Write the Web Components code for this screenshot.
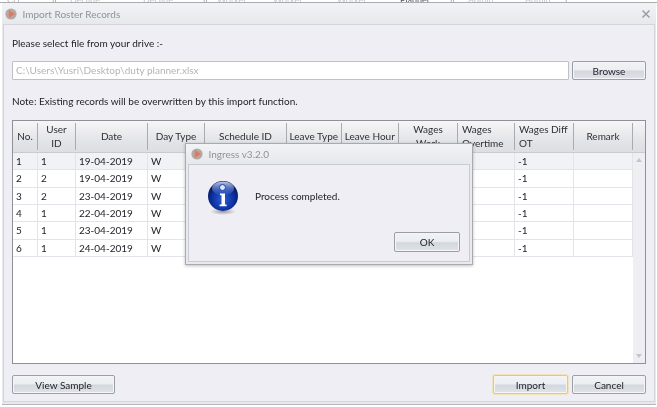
<!DOCTYPE html>
<html><head><meta charset="utf-8">
<style>
html,body{margin:0;padding:0;background:#fff;width:657px;height:407px;overflow:hidden;font:10px "Lato","Open Sans",sans-serif;color:#23232b}
</style></head><body>
<import-window heading="Import Roster Records">
  <span slot="label">Please select file from your drive :-</span>
  <span slot="note">Note: Existing records will be overwritten by this import function.</span>
  <roster-table slot="table"></roster-table>
</import-window>
<script>
const btnCss=`:host{display:block;box-sizing:border-box;border:1px solid #9a9ea6;border-radius:2px;background:linear-gradient(#f1f2f5 0,#eceef2 45%,#d3d8df 55%,#e0e3e8 100%);box-shadow:inset 0 0 0 1px #f4f5f8;text-align:center;color:#23232b;height:100%;line-height:18px}
:host([focused]){border-color:#e8c878;box-shadow:0 0 0 1px #f3e3b8,inset 0 0 0 1px #f4f5f8}`;
class UiButton extends HTMLElement{constructor(){super();this.attachShadow({mode:'open'}).innerHTML=`<style>${btnCss}</style><slot></slot>`}}
customElements.define('ui-button',UiButton);

class TitleIcon extends HTMLElement{constructor(){super();this.attachShadow({mode:'open'}).innerHTML=`<style>:host{display:block;width:12px;height:12px}svg{display:block}</style>
<svg width="12" height="12" viewBox="0 0 12 12"><circle cx="6" cy="6" r="5.6" fill="#b5a9a6"/><path d="M3.8 1.9 10 6 3.8 10.1Z" fill="#e2795a"/></svg>`}}
customElements.define('title-icon',TitleIcon);

class TitleBar extends HTMLElement{constructor(){super();this.attachShadow({mode:'open'}).innerHTML=`<style>:host{display:flex;align-items:center;gap:5.5px;height:21px;padding:0 3px 0 3px;box-sizing:border-box;background:linear-gradient(#f2f3f6,#e6e8ec);color:#8f9298;font-size:10px}
.t{flex:1}</style><title-icon></title-icon><span class="t"><slot></slot></span><slot name="close"></slot>`}}
customElements.define('title-bar',TitleBar);

class InfoIcon extends HTMLElement{constructor(){super();this.attachShadow({mode:'open'}).innerHTML=`<style>:host{display:block;width:32px;height:36px}svg{display:block}</style>
<svg width="32" height="36" viewBox="0 0 32 36">
<defs><radialGradient id="b" cx=".5" cy=".62" r=".62"><stop offset="0" stop-color="#2c5fd6"/><stop offset=".6" stop-color="#0d2f9e"/><stop offset="1" stop-color="#04124f"/></radialGradient>
<linearGradient id="g" x1="0" y1="0" x2="0" y2="1"><stop offset="0" stop-color="#c6d4f2" stop-opacity=".95"/><stop offset="1" stop-color="#4f78d6" stop-opacity=".15"/></linearGradient>
<radialGradient id="s"><stop offset="0" stop-color="#555" stop-opacity=".55"/><stop offset="1" stop-color="#555" stop-opacity="0"/></radialGradient></defs>
<ellipse cx="16" cy="31.5" rx="13" ry="3.5" fill="url(#s)"/>
<circle cx="16" cy="16" r="15" fill="url(#b)"/>
<ellipse cx="16" cy="8.5" rx="11" ry="7" fill="url(#g)"/>
<circle cx="15.5" cy="7.5" r="3" fill="#dfe7f7" stroke="#1a3fa8" stroke-width="1"/>
<path d="M13 13.5h5v11h1.600v1.800h-7V24.500H14.500v-9.200h-1.500Z" fill="#fff"/>
</svg>`}}
customElements.define('info-icon',InfoIcon);

const COLS=[25,38,72,57,82,54.5,57.5,59,57,59,59];
const HEAD=['No.','User<br>ID','Date','Day Type','Schedule ID','Leave Type','Leave Hour','Wages<br>Work','Wages<br>Overtime','Wages Diff<br>OT','Remark'];
const ROWS=[['1','1','19-04-2019','W'],['2','2','19-04-2019','W'],['3','2','23-04-2019','W'],['4','1','22-04-2019','W'],['5','1','23-04-2019','W'],['6','1','24-04-2019','W']];
class RosterTable extends HTMLElement{constructor(){super();
const tpl=COLS.map(c=>c+'px').join(' ');
const hd=HEAD.map((h,i)=>`<div class="h${i==8||i==9?' l':''}">${h}</div>`).join('');
const rw=ROWS.map((r,n)=>`<div class="r${n==0?' sel':''}">`+COLS.map((_,i)=>`<div class="c">${i<4?r[i]:i==9?'-1':''}</div>`).join('')+`</div>`).join('');
this.attachShadow({mode:'open'}).innerHTML=`<style>
:host{display:flex;flex-direction:column;box-sizing:border-box;height:100%;background:#fff;border:1px solid #8f9196;position:relative;min-height:0}
.head,.r{display:grid;grid-template-columns:${tpl}}
.head{height:32px;box-sizing:border-box;background:linear-gradient(#f6f6f7,#e4e5e8 60%,#dcdee1);border-bottom:1px solid #c9cbd0;padding-right:13px;color:#2e2f36}
.h{display:flex;align-items:center;justify-content:center;text-align:center;line-height:13.500px;border-right:1px solid #a9abb1;margin:2px 0 3px;box-sizing:border-box;white-space:nowrap}
.h.l{justify-content:flex-start;text-align:left;padding-left:4px}
.wrap{flex:1;display:flex;min-height:0}
.body{flex:1}
.r{height:17.33px;box-sizing:border-box;border-bottom:1px solid #e3e4e9;color:#23232b}
.c{border-right:1px solid #e3e4e9;padding-left:3px;line-height:16px;overflow:hidden;white-space:nowrap;box-sizing:border-box}
.sel{background:#f1f2f5}
.sb{width:13px;background:#eeeef3;display:flex;flex-direction:column;justify-content:space-between;align-items:center;padding:5px 0;box-sizing:border-box}
.sb i{display:block;width:0;height:0;border-left:3.5px solid transparent;border-right:3.5px solid transparent}
.up{border-bottom:4px solid #c3c5ca}.dn{border-top:4px solid #c3c5ca}
</style><div class="head">${hd}</div><div class="wrap"><div class="body">${rw}</div><div class="sb"><i class="up"></i><i class="dn"></i></div></div>`}}
customElements.define('roster-table',RosterTable);

class MessageDialog extends HTMLElement{constructor(){super();this.attachShadow({mode:'open'}).innerHTML=`<style>
:host{display:flex;flex-direction:column;position:absolute;left:185px;top:143px;width:288px;height:122px;box-sizing:border-box;border:1px solid #a8aaae;background:#e8eaee;box-shadow:0 1px 3px rgba(0,0,0,.25)}
.panel{flex:1;margin:0 2px 2px;border:1px solid #c9cbd2;background:#eeeef4;display:flex;flex-direction:column;box-sizing:border-box;padding:15px 9px 9px 18px}
.msg{display:flex;gap:16px;flex:1;align-items:flex-start}
.msg span{margin-top:10px;color:#23232b}
.foot{display:flex;justify-content:flex-end}
ui-button{width:66px;height:20px}
title-bar{flex:none;height:20px;padding-left:5px}
</style><title-bar>Ingress v3.2.0</title-bar><div class="panel"><div class="msg"><info-icon></info-icon><span>Process completed.</span></div><div class="foot"><ui-button>OK</ui-button></div></div>`}}
customElements.define('message-dialog',MessageDialog);

class BehindStrip extends HTMLElement{constructor(){super();
const items=[[45,'CH','#bbb'],[18,'||','#888'],[73,'Decline','#c4c4c4'],[60,'Decline','#c4c4c4'],[14,'||','#888'],[56,'Worker','#c4c4c4'],[64,'Worker','#c4c4c4'],[63,'Worker','#c4c4c4'],[50,'Planner','#555'],[18,'||','#888'],[57,'Admin','#c4c4c4'],[40,'Admin','#c4c4c4'],[20,'|','#888']];
this.attachShadow({mode:'open'}).innerHTML=`<style>:host{display:flex;overflow:hidden;background:#fff;border-bottom:1px solid #a9abaf;height:2px;font-size:9px;padding-left:7px}
span{flex:none;display:block;white-space:nowrap;line-height:0;overflow:visible}</style>`+items.map(([w,t,c])=>`<span style="width:${w}px;color:${c}">${t}</span>`).join('')}}
customElements.define('behind-strip',BehindStrip);

class ImportWindow extends HTMLElement{constructor(){super();const h=this.getAttribute('heading');this.attachShadow({mode:'open'}).innerHTML=`<style>
:host{display:flex;flex-direction:column;width:657px;height:407px;box-sizing:border-box;position:relative;filter:blur(.35px)}
.frame{flex:1;margin:0 1px 2px 2px;background:#e6e8ec;display:flex;flex-direction:column;border-bottom:1px solid #b5b7bb;min-height:0}
.x{width:10px;height:10px;display:block;margin-right:2px}
.content{flex:1;margin:0 1px 2px;background:#eeeef4;border:1px solid #d3d5da;display:flex;flex-direction:column;padding:10px 8px 7px 8px;min-height:0}
.label,.note{height:16px;line-height:16px;color:#23232b}
.file{display:flex;gap:3px;height:19px;margin-top:10px}
.input{flex:1;background:#fff;border:1px solid #bfc1c6;border-radius:1px;color:#b3b5ba;padding-left:3px;line-height:17px;box-sizing:border-box}
.browse{width:74px}
.note{margin-top:13px}
.tb{flex:1;margin-top:11px;min-height:0}
.foot{display:flex;gap:4px;margin-top:11px;height:19px}
.foot .s{flex:1}
.v{width:103px}.i{width:75px}.c{width:74px}
</style>
<behind-strip></behind-strip>
<div class="frame"><title-bar>${h}<svg slot="close" class="x" viewBox="0 0 10 10"><path d="M1.5 1.5 8.5 8.5M8.5 1.5 1.5 8.5" stroke="#9a9da3" stroke-width="1.5"/></svg></title-bar>
<div class="content">
<div class="label"><slot name="label"></slot></div>
<div class="file"><div class="input">C:\\Users\\Yusri\\Desktop\\duty planner.xlsx</div><ui-button class="browse">Browse</ui-button></div>
<div class="note"><slot name="note"></slot></div>
<div class="tb"><slot name="table"></slot></div>
<div class="foot"><ui-button class="v">View Sample</ui-button><div class="s"></div><ui-button class="i" focused>Import</ui-button><ui-button class="c">Cancel</ui-button></div>
</div></div>
<message-dialog></message-dialog>`}}
customElements.define('import-window',ImportWindow);
</script>
</body></html>
